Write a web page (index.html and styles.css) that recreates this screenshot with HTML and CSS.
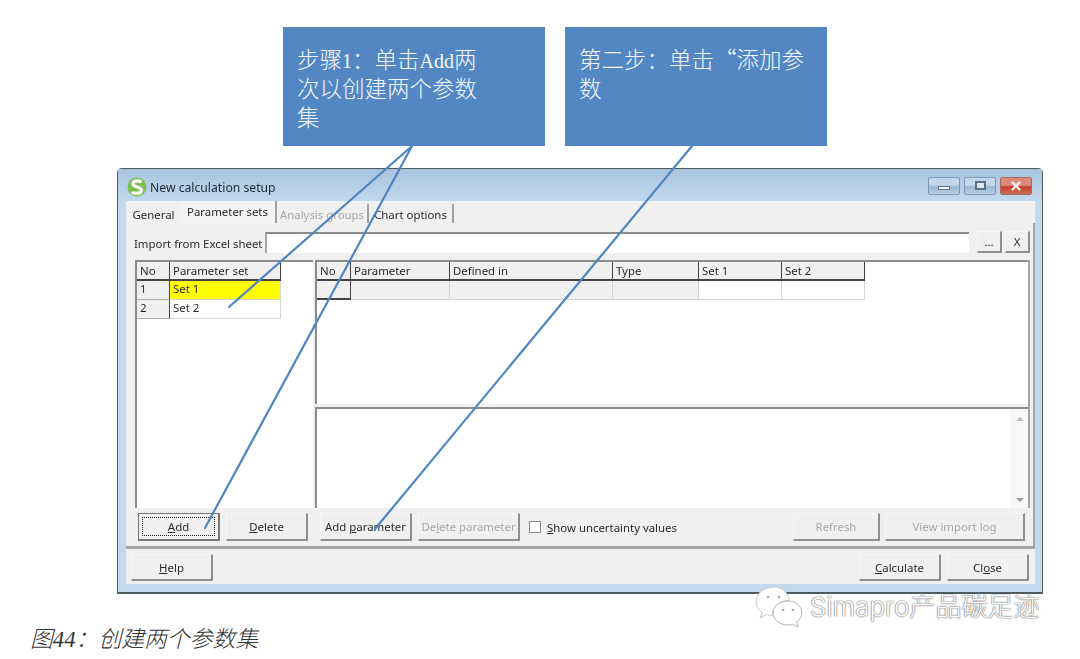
FILE: index.html

```html
<!DOCTYPE html>
<html lang="zh-CN">
<head>
  <meta charset="UTF-8">
  <title>图44:创建两个参数集</title>
  <link rel="stylesheet" href="styles.css">
</head>
<body>
  <div class="page">
    <div class="callouts">
      <div class="callout callout-first">步骤<span class="latin">1</span>：单击<span class="latin">Add</span>两次以创建两个参数集</div>
      <div class="callout callout-second">第二步：单击“添加参数</div>
    </div>

    <div class="window">
      <div class="title-bar">
        <svg class="app-icon" viewBox="0 0 20 20">
          <circle cx="10" cy="10" r="9.500" fill="#7cc04e"/>
          <path d="M14.500 5C12 3 6 3.500 6 7s8.500 2.500 8.500 6S8 17.500 5 15" fill="none" stroke="#fff" stroke-width="3.200"/>
        </svg>
        <span class="title-text">New calculation setup</span>
        <div class="win-controls">
          <div class="win-btn"><span class="glyph-min"></span></div>
          <div class="win-btn"><span class="glyph-max"></span></div>
          <div class="win-btn win-close">
            <svg viewBox="0 0 12 10" width="12" height="10"><path d="M2 1l8 8M10 1L2 9" stroke="#fff" stroke-width="2.400"/></svg>
          </div>
        </div>
      </div>

      <div class="content">
        <div class="tabs">
          <div class="tab tab-general">General</div>
          <div class="tab tab-params active">Parameter sets</div>
          <div class="tab tab-groups disabled">Analysis groups</div>
          <div class="tab tab-chart">Chart options</div>
        </div>

        <div class="sheet">
          <div class="import-row">
            <span class="import-label">Import from Excel sheet</span>
            <div class="import-input"></div>
            <button class="btn btn-small">...</button>
            <button class="btn btn-small">X</button>
          </div>

          <div class="panels">
            <div class="panel panel-left">
              <div class="grid grid-sets">
                <div class="cell head">No</div>
                <div class="cell head">Parameter set</div>
                <div class="cell fixed">1</div>
                <div class="cell selected">Set 1</div>
                <div class="cell fixed">2</div>
                <div class="cell">Set 2</div>
              </div>
            </div>
            <div class="panel-stack">
              <div class="panel panel-top">
                <div class="grid grid-params">
                  <div class="cell head">No</div>
                  <div class="cell head">Parameter</div>
                  <div class="cell head">Defined in</div>
                  <div class="cell head">Type</div>
                  <div class="cell head">Set 1</div>
                  <div class="cell head">Set 2</div>
                  <div class="cell fixed current"></div>
                  <div class="cell shaded"></div>
                  <div class="cell shaded"></div>
                  <div class="cell shaded"></div>
                  <div class="cell"></div>
                  <div class="cell"></div>
                </div>
              </div>
              <div class="panel panel-bottom">
                <div class="scrollbar">
                  <span class="arrow-up"></span>
                  <span class="arrow-down"></span>
                </div>
              </div>
            </div>
          </div>

          <div class="action-row">
            <button class="btn btn-add"><span class="focus-ring"><u>A</u>dd</span></button>
            <button class="btn btn-delete"><u>D</u>elete</button>
            <button class="btn btn-addparam">Add <u>p</u>arameter</button>
            <button class="btn btn-delparam" disabled>De<u>l</u>ete parameter</button>
            <label class="check"><span class="check-box"></span><span><u>S</u>how uncertainty values</span></label>
            <div class="spacer"></div>
            <button class="btn btn-refresh" disabled>Refresh</button>
            <button class="btn btn-log" disabled>View import log</button>
          </div>
        </div>

        <div class="footer-row">
          <button class="btn btn-footer"><u>H</u>elp</button>
          <div class="spacer"></div>
          <button class="btn btn-footer"><u>C</u>alculate</button>
          <button class="btn btn-footer">Cl<u>o</u>se</button>
        </div>
      </div>
    </div>

    <div class="caption">图<span class="latin">44</span>：创建两个参数集</div>

    <svg class="arrows" viewBox="0 0 1080 659" width="1080" height="659">
      <path d="M412 146L229 307M412 146L205 528M692 146L375 529" fill="none" stroke="#4f86c0" stroke-width="2.200" stroke-linecap="round"/>
    </svg>

    <div class="watermark">
      <svg class="wechat" viewBox="0 0 50 42" width="50" height="42">
        <path d="M20 1C10 1 2 7.500 2 15.500c0 4.500 2.500 8.500 6.500 11L6 32l6.500-3.500c2 .6 4 1 6 1-.5-8 6-15 17-15C34.500 7 28 1 20 1z" fill="#fff" stroke="#c9c9c9" stroke-width="1"/>
        <path d="M34 15c-8.500 0-15 5.500-15 12s6.500 12 15 12c1.500 0 3-.2 4.500-.7L44 41l-1.200-5c3-2.200 5-5.300 5-9C47.800 20.500 42 15 34 15z" fill="#fff" stroke="#b5b5b5" stroke-width="1"/>
        <circle cx="14" cy="11" r="1.300" fill="#aaa"/>
        <circle cx="25" cy="11" r="1.300" fill="#aaa"/>
        <circle cx="29" cy="24" r="1.300" fill="#aaa"/>
        <circle cx="39" cy="24" r="1.300" fill="#aaa"/>
      </svg>
      <span class="watermark-text">Simapro产品碳足迹</span>
    </div>
  </div>
</body>
</html>
```

FILE: styles.css

```css
* {
  box-sizing: border-box;
  margin: 0;
  padding: 0;
}

body {
  background: #fff;
  font-family: "Noto Sans", "Noto Sans CJK SC", sans-serif;
  font-size: 11.400px;
  color: #2a2a2a;
}

.page {
  position: relative;
  width: 1080px;
  height: 659px;
  overflow: hidden;
  padding-top: 27px;
}

.latin {
  font-family: "Liberation Serif", serif;
  line-height: 1;
}

/* blue step boxes */
.callouts {
  display: flex;
  gap: 20px;
  margin-left: 283px;
}

.callout {
  width: 262px;
  height: 119px;
  padding: 17px 65px 0 14px;
  background: #5287c3;
  color: #f4f8fc;
  font-family: "Noto Sans CJK SC", sans-serif;
  font-size: 22.500px;
  font-weight: 300;
  line-height: 29px;
}

.callout .latin {
  font-size: 20px;
}

.callout-second {
  padding-right: 20px;
}

/* dialog */
.window {
  display: flex;
  flex-direction: column;
  width: 926px;
  height: 426px;
  margin: 22px 0 0 117px;
  padding: 0 7px 8px 8px;
  background: #c3d9ed;
  border: 1px solid #4d5a60;
  border-bottom-width: 2px;
  border-radius: 5px 5px 0 0;
  filter: blur(0.350px);
}

.title-bar {
  display: flex;
  align-items: center;
  flex: none;
  height: 32px;
  margin: 0 -7px 0 -8px;
  padding: 4px 10px 0 9px;
  background: linear-gradient(#a9c3dd, #c2d8ee);
}

.app-icon {
  width: 20px;
  height: 20px;
  margin-right: 3px;
}

.title-text {
  font-size: 12.200px;
  color: #1c2a36;
}

.win-controls {
  display: flex;
  gap: 4px;
  margin: -3px 0 0 auto;
}

.win-btn {
  display: flex;
  align-items: center;
  justify-content: center;
  width: 32px;
  height: 18px;
  background: linear-gradient(#c3d6ea 45%, #9db7d2 55%, #b9cfe5);
  border: 1px solid #7d97b2;
  border-radius: 2px;
}

.win-close {
  background: linear-gradient(#dc8a7c 45%, #c2432f 55%, #cf6a58);
  border-color: #a8695e;
}

.glyph-min {
  width: 12px;
  height: 4px;
  margin-top: 5px;
  background: #f2f6fa;
  border: 1px solid #5c7084;
}

.glyph-max {
  width: 11px;
  height: 9px;
  background: #dce7f2;
  border: 2px solid #5c7084;
}

.content {
  display: flex;
  flex-direction: column;
  flex: 1;
  background: #f0f0f0;
}

/* tabs */
.tabs {
  display: flex;
  flex: none;
  height: 22px;
  padding: 3px 0 0 1px;
}

.tab {
  height: 19px;
  padding-top: 2px;
  text-align: center;
  line-height: 17px;
  border-right: 2px solid #a0a0a0;
}

.tab-general {
  width: 53px;
  border-right: 0;
}

.tab-params {
  width: 97px;
  height: 22px;
  margin-top: -3px;
  background: #f4f4f4;
}

.tab-groups {
  width: 92px;
}

.tab-chart {
  width: 85px;
}

.disabled {
  color: #a8a8a8;
}

.sheet {
  display: flex;
  flex-direction: column;
  flex: none;
  height: 326px;
  padding: 8px 3px 0 8px;
  border-right: 2px solid #a5a5a5;
  border-bottom: 3px solid #a5a5a5;
}

.import-row {
  display: flex;
  align-items: center;
  gap: 3px;
  flex: none;
  height: 22px;
}

.import-label {
  width: 128px;
  flex: none;
  padding-top: 2px;
  white-space: nowrap;
}

.import-input {
  width: 705px;
  height: 21px;
  margin-right: 5px;
  background: #fff;
  border-top: 2px solid #8c8c8c;
  border-left: 2px solid #a8a8a8;
}

/* panels */
.panels {
  display: flex;
  gap: 2px;
  flex: none;
  height: 248px;
  margin: 7px 0 0 1px;
}

.panel {
  background: #fff;
  border-top: 2px solid #8c8c8c;
  border-left: 2px solid #8c8c8c;
}

.panel-left {
  width: 178px;
}

.panel-stack {
  display: flex;
  flex-direction: column;
  gap: 3px;
  width: 715px;
  border-right: 2px solid #a5a5a5;
}

.panel-top {
  height: 144px;
}

.panel-bottom {
  display: flex;
  justify-content: flex-end;
  height: 101px;
}

.grid {
  display: grid;
  grid-auto-rows: 19px;
}

.grid-sets {
  grid-template-columns: 33px 111px;
  width: 144px;
}

.grid-params {
  grid-template-columns: 34px 99px 163px 86px 83px 83px;
  width: 548px;
}

.cell {
  padding-left: 3px;
  line-height: 16px;
  background: #fff;
  border-right: 1px solid #d4d4d4;
  border-bottom: 1px solid #d4d4d4;
}

.head {
  line-height: 17px;
  background: #f0f0f0;
  border-right: 1px solid #444;
  border-bottom: 2px solid #444;
}

.fixed {
  background: #f0f0f0;
  border-right: 1px solid #444;
  border-bottom: 1px solid #aaa;
}

.current {
  border-bottom: 2px solid #444;
}

.selected {
  background: #ffff00;
}

.shaded {
  background: #f0f0f0;
}

.scrollbar {
  display: flex;
  flex-direction: column;
  align-items: center;
  justify-content: space-between;
  width: 17px;
  padding: 8px 0 6px;
  background: #f7f7f7;
}

.arrow-up,
.arrow-down {
  width: 0;
  height: 0;
  border-left: 4px solid transparent;
  border-right: 4px solid transparent;
}

.arrow-up {
  border-bottom: 4px solid #bbb;
}

.arrow-down {
  border-top: 4px solid #999;
}

/* buttons */
.btn {
  flex: none;
  font-family: inherit;
  font-size: 11.400px;
  color: #2a2a2a;
  white-space: nowrap;
  background: #f0f0f0;
  border: 1px solid #f7f7f7;
  border-right: 2px solid #8f8f8f;
  border-bottom: 2px solid #8f8f8f;
}

.btn:disabled {
  color: #a8a8a8;
}

.btn-small {
  width: 25px;
  height: 22px;
}

.action-row {
  display: flex;
  align-items: center;
  flex: none;
  height: 28px;
  margin-top: 5px;
  padding-left: 4px;
}

.action-row .btn {
  height: 28px;
}

.btn-add {
  width: 82px;
  padding: 3px;
  border: 1px solid #777;
  border-right-width: 2px;
  border-bottom-width: 2px;
}

.focus-ring {
  display: block;
  height: 100%;
  line-height: 17px;
  border: 1px dotted #222;
}

.btn-delete {
  width: 82px;
  margin-left: 6px;
}

.btn-addparam {
  width: 92px;
  margin-left: 12px;
}

.btn-delparam {
  width: 102px;
  margin-left: 6px;
}

.check {
  display: flex;
  align-items: center;
  gap: 6px;
  margin-left: 9px;
}

.check-box {
  width: 12px;
  height: 12px;
  background: #fff;
  border: 1px solid #888;
}

.spacer {
  flex: 1;
}

.btn-refresh {
  width: 87px;
}

.btn-log {
  width: 140px;
  margin: 0 5px 0 5px;
}

.footer-row {
  display: flex;
  gap: 6px;
  flex: 1;
  padding: 5px 6px 3px 5px;
}

.btn-footer {
  width: 82px;
  height: 27px;
}

/* caption under the dialog */
.caption {
  margin: 31px 0 0 30px;
  font-family: "Noto Sans CJK SC", sans-serif;
  font-size: 22.800px;
  font-style: italic;
  font-weight: 300;
  line-height: 26px;
  color: #333;
}

/* leader lines and watermark lie over the dialog */
.arrows {
  position: absolute;
  top: 0;
  left: 0;
}

.watermark {
  position: absolute;
  top: 586px;
  left: 754px;
  display: flex;
  align-items: center;
  gap: 6px;
}

.watermark-text {
  font-family: "Inter", "Noto Sans CJK SC", sans-serif;
  font-size: 26px;
  font-weight: 300;
  line-height: 30px;
  color: #fff;
  text-shadow: 0 0 1px #777, 0 0 1px #777, 0 0 2px #999;
  white-space: nowrap;
}
```
